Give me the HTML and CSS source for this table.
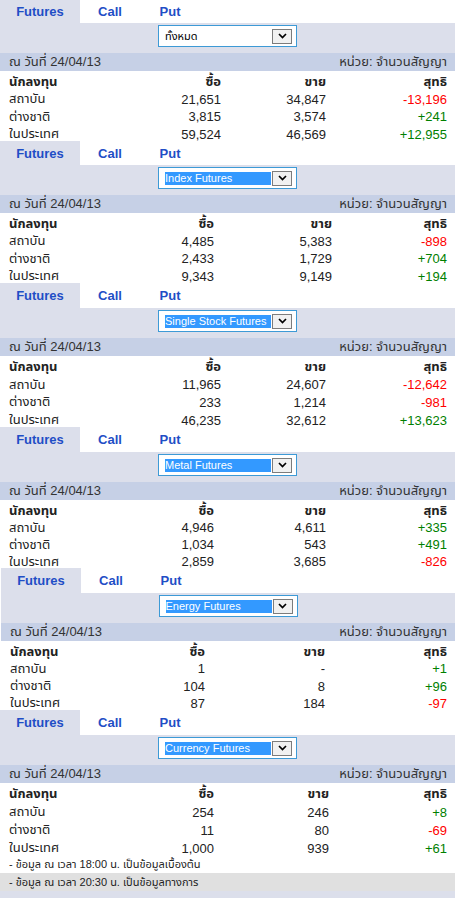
FILE: index.html
```html
<!DOCTYPE html>
<html lang="th">
<head>
<meta charset="utf-8">
<title>Futures</title>
<link rel="stylesheet" href="styles.css">
</head>
<body>
<div class="page">

  <section class="block block-1">
    <nav class="tabs">
      <a class="tab tab-active" href="#">Futures</a>
      <a class="tab" href="#">Call</a>
      <a class="tab" href="#">Put</a>
    </nav>
    <div class="filter">
      <div class="select">
        <span class="select-value">ทั้งหมด</span>
        <span class="select-btn"><svg width="9" height="6" viewBox="0 0 9 6"><path d="M1 1 L4.5 4.5 L8 1" fill="none" stroke="#000" stroke-width="1.7"/></svg></span>
      </div>
    </div>
    <div class="datebar"><span>ณ วันที่ 24/04/13</span><span>หน่วย: จำนวนสัญญา</span></div>
    <div class="grid cols-a">
      <div class="th">นักลงทุน</div><div class="th num">ซื้อ</div><div class="th num">ขาย</div><div class="th num">สุทธิ</div>
      <div>สถาบัน</div><div class="num">21,651</div><div class="num">34,847</div><div class="num down">-13,196</div>
      <div>ต่างชาติ</div><div class="num">3,815</div><div class="num">3,574</div><div class="num up">+241</div>
      <div>ในประเทศ</div><div class="num">59,524</div><div class="num">46,569</div><div class="num up">+12,955</div>
    </div>
  </section>

  <section class="block block-2">
    <nav class="tabs">
      <a class="tab tab-active" href="#">Futures</a>
      <a class="tab" href="#">Call</a>
      <a class="tab" href="#">Put</a>
    </nav>
    <div class="filter">
      <div class="select">
        <span class="select-value is-focused">Index Futures</span>
        <span class="select-btn"><svg width="9" height="6" viewBox="0 0 9 6"><path d="M1 1 L4.5 4.5 L8 1" fill="none" stroke="#000" stroke-width="1.7"/></svg></span>
      </div>
    </div>
    <div class="datebar"><span>ณ วันที่ 24/04/13</span><span>หน่วย: จำนวนสัญญา</span></div>
    <div class="grid cols-b">
      <div class="th">นักลงทุน</div><div class="th num">ซื้อ</div><div class="th num">ขาย</div><div class="th num">สุทธิ</div>
      <div>สถาบัน</div><div class="num">4,485</div><div class="num">5,383</div><div class="num down">-898</div>
      <div>ต่างชาติ</div><div class="num">2,433</div><div class="num">1,729</div><div class="num up">+704</div>
      <div>ในประเทศ</div><div class="num">9,343</div><div class="num">9,149</div><div class="num up">+194</div>
    </div>
  </section>

  <section class="block block-3">
    <nav class="tabs">
      <a class="tab tab-active" href="#">Futures</a>
      <a class="tab" href="#">Call</a>
      <a class="tab" href="#">Put</a>
    </nav>
    <div class="filter">
      <div class="select">
        <span class="select-value is-focused">Single Stock Futures</span>
        <span class="select-btn"><svg width="9" height="6" viewBox="0 0 9 6"><path d="M1 1 L4.5 4.5 L8 1" fill="none" stroke="#000" stroke-width="1.7"/></svg></span>
      </div>
    </div>
    <div class="datebar"><span>ณ วันที่ 24/04/13</span><span>หน่วย: จำนวนสัญญา</span></div>
    <div class="grid cols-c">
      <div class="th">นักลงทุน</div><div class="th num">ซื้อ</div><div class="th num">ขาย</div><div class="th num">สุทธิ</div>
      <div>สถาบัน</div><div class="num">11,965</div><div class="num">24,607</div><div class="num down">-12,642</div>
      <div>ต่างชาติ</div><div class="num">233</div><div class="num">1,214</div><div class="num down">-981</div>
      <div>ในประเทศ</div><div class="num">46,235</div><div class="num">32,612</div><div class="num up">+13,623</div>
    </div>
  </section>

  <section class="block block-4">
    <nav class="tabs">
      <a class="tab tab-active" href="#">Futures</a>
      <a class="tab" href="#">Call</a>
      <a class="tab" href="#">Put</a>
    </nav>
    <div class="filter">
      <div class="select">
        <span class="select-value is-focused">Metal Futures</span>
        <span class="select-btn"><svg width="9" height="6" viewBox="0 0 9 6"><path d="M1 1 L4.5 4.5 L8 1" fill="none" stroke="#000" stroke-width="1.7"/></svg></span>
      </div>
    </div>
    <div class="datebar"><span>ณ วันที่ 24/04/13</span><span>หน่วย: จำนวนสัญญา</span></div>
    <div class="grid cols-d">
      <div class="th">นักลงทุน</div><div class="th num">ซื้อ</div><div class="th num">ขาย</div><div class="th num">สุทธิ</div>
      <div>สถาบัน</div><div class="num">4,946</div><div class="num">4,611</div><div class="num up">+335</div>
      <div>ต่างชาติ</div><div class="num">1,034</div><div class="num">543</div><div class="num up">+491</div>
      <div>ในประเทศ</div><div class="num">2,859</div><div class="num">3,685</div><div class="num down">-826</div>
    </div>
  </section>

  <section class="block block-5">
    <nav class="tabs">
      <a class="tab tab-active" href="#">Futures</a>
      <a class="tab" href="#">Call</a>
      <a class="tab" href="#">Put</a>
    </nav>
    <div class="filter">
      <div class="select">
        <span class="select-value is-focused">Energy Futures</span>
        <span class="select-btn"><svg width="9" height="6" viewBox="0 0 9 6"><path d="M1 1 L4.5 4.5 L8 1" fill="none" stroke="#000" stroke-width="1.7"/></svg></span>
      </div>
    </div>
    <div class="datebar"><span>ณ วันที่ 24/04/13</span><span>หน่วย: จำนวนสัญญา</span></div>
    <div class="grid cols-e">
      <div class="th">นักลงทุน</div><div class="th num">ซื้อ</div><div class="th num">ขาย</div><div class="th num">สุทธิ</div>
      <div>สถาบัน</div><div class="num">1</div><div class="num">-</div><div class="num up">+1</div>
      <div>ต่างชาติ</div><div class="num">104</div><div class="num">8</div><div class="num up">+96</div>
      <div>ในประเทศ</div><div class="num">87</div><div class="num">184</div><div class="num down">-97</div>
    </div>
  </section>

  <section class="block block-6">
    <nav class="tabs">
      <a class="tab tab-active" href="#">Futures</a>
      <a class="tab" href="#">Call</a>
      <a class="tab" href="#">Put</a>
    </nav>
    <div class="filter">
      <div class="select">
        <span class="select-value is-focused">Currency Futures</span>
        <span class="select-btn"><svg width="9" height="6" viewBox="0 0 9 6"><path d="M1 1 L4.5 4.5 L8 1" fill="none" stroke="#000" stroke-width="1.7"/></svg></span>
      </div>
    </div>
    <div class="datebar"><span>ณ วันที่ 24/04/13</span><span>หน่วย: จำนวนสัญญา</span></div>
    <div class="grid cols-f">
      <div class="th">นักลงทุน</div><div class="th num">ซื้อ</div><div class="th num">ขาย</div><div class="th num">สุทธิ</div>
      <div>สถาบัน</div><div class="num">254</div><div class="num">246</div><div class="num up">+8</div>
      <div>ต่างชาติ</div><div class="num">11</div><div class="num">80</div><div class="num down">-69</div>
      <div>ในประเทศ</div><div class="num">1,000</div><div class="num">939</div><div class="num up">+61</div>
    </div>
  </section>

  <footer class="notes">
    <div class="note">- ข้อมูล ณ เวลา 18:00 น. เป็นข้อมูลเบื้องต้น</div>
    <div class="note note-alt">- ข้อมูล ณ เวลา 20:30 น. เป็นข้อมูลทางการ</div>
    <div class="page-end"></div>
  </footer>

</div>
</body>
</html>
```

FILE: styles.css
```css
html, body {
  margin: 0;
  padding: 0;
  background: #ffffff;
}

body {
  width: 455px;
  overflow: hidden;
  font-family: Tahoma, "Liberation Sans", "Noto Sans Thai", "Noto Sans", sans-serif;
  font-size: 13px;
  color: #222222;
}

.page {
  display: flex;
  flex-direction: column;
}

/* tab strip */
.tabs {
  display: flex;
  height: 25px;
  background: #ffffff;
}

.block-1 .tabs { height: 23px; }
.block-2 .tabs { height: 24px; }

.block-5 { margin-left: 1px; }

.tab {
  display: flex;
  align-items: center;
  justify-content: center;
  width: 60px;
  font-weight: bold;
  color: #1f4ec6;
  text-decoration: none;
}

.tab-active {
  width: 80px;
  background: #dcdfeb;
}

/* filter row */
.filter {
  box-sizing: border-box;
  height: 30px;
  padding-top: 2px;
  background: #dcdfeb;
  display: flex;
  justify-content: center;
  align-items: flex-start;
}

.select {
  box-sizing: border-box;
  width: 139px;
  height: 22px;
  border: 1px solid #3d9ad6;
  background: #ffffff;
  display: flex;
  align-items: center;
  gap: 1px;
  padding: 0 4px 0 6px;
  font-size: 11px;
}

.select-value {
  flex: 1;
  height: 13px;
  line-height: 13px;
  color: #000000;
  white-space: nowrap;
  overflow: hidden;
}

.select-value.is-focused {
  background: #3399ff;
  color: #ffffff;
}

.select-btn {
  box-sizing: border-box;
  width: 20px;
  height: 15px;
  border: 1px solid #7c7c7c;
  background: #f1f1f1;
  display: flex;
  align-items: center;
  justify-content: center;
}

/* date bar */
.datebar {
  height: 18px;
  background: #c6d0e6;
  display: flex;
  justify-content: space-between;
  align-items: center;
  padding: 0 8px 0 9px;
  color: #333333;
}

/* data grid */
.grid {
  display: grid;
  padding: 0 8px 0 9px;
  grid-auto-rows: 17.5px;
  align-items: center;
  white-space: nowrap;
}

.grid > div {
  padding-top: 4px;
}

.cols-a { grid-template-columns: 90px 122px 105px 1fr; }
.cols-b { grid-template-columns: 90px 115px 118px 1fr; }
.cols-c { grid-template-columns: 90px 122px 105px 1fr; grid-auto-rows: 17.75px; }
.cols-d { grid-template-columns: 90px 115px 112px 1fr; grid-auto-rows: 17px; }
.cols-e { grid-template-columns: 90px 105px 120px 1fr; grid-auto-rows: 17.25px; }
.cols-f { grid-template-columns: 90px 115px 115px 1fr; grid-auto-rows: 18px; }

.th { font-weight: bold; }
.num { text-align: right; }
.up { color: #008000; }
.down { color: #ff0000; }

/* notes */
.notes {
  font-size: 11px;
  color: #222222;
}

.note {
  height: 18px;
  display: flex;
  align-items: center;
  padding-left: 9px;
}

.note-alt { background: #e0e0e0; }

.page-end {
  height: 10px;
  background: #dcdfeb;
}
```
